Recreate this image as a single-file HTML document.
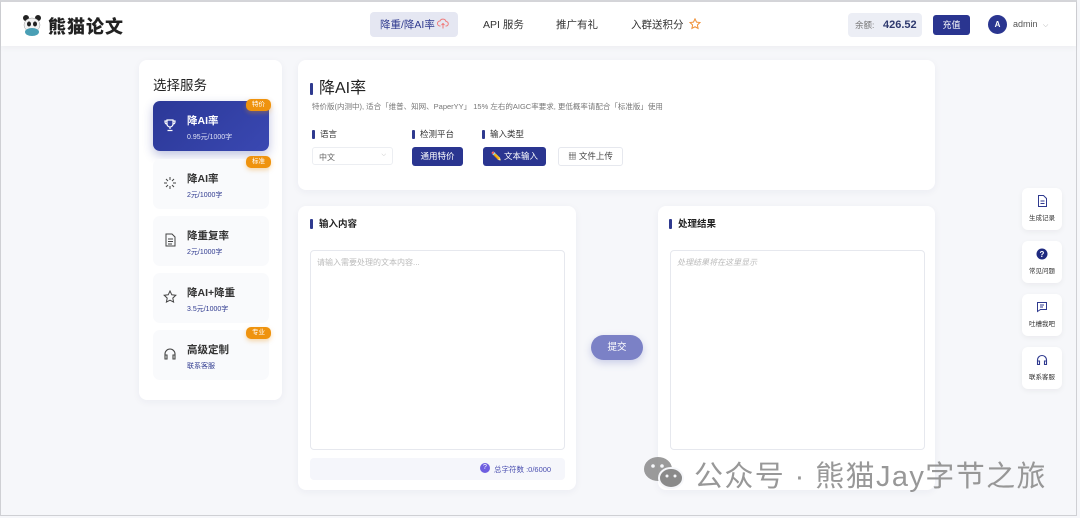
<!DOCTYPE html>
<html><head><meta charset="utf-8"><style>
*{box-sizing:border-box;margin:0;padding:0}
body{width:1080px;height:518px;overflow:hidden;background:#f6f7fa;font-family:"Liberation Sans","Noto Sans CJK SC",sans-serif;color:#222;position:relative}
.a{position:absolute}
.frame{left:0;top:0;width:1077px;height:516px;border:1px solid #cfd0d4;border-top:2px solid #d5d6da}
.hdr{left:1px;top:2px;width:1075px;height:44px;background:#fff;box-shadow:0 2px 6px rgba(0,0,0,.04)}
.card{background:#fff;border-radius:8px;box-shadow:0 2px 8px rgba(30,40,90,.05)}
.bar{display:inline-block;width:3px;background:#2f3a8f;border-radius:1px;vertical-align:middle;margin-right:6px}
.svc{left:153px;width:116px;height:50px;background:#f9fafc;border-radius:7px}
.svc .t{position:absolute;left:34px;top:12px;font-size:10.5px;font-weight:bold;color:#333}
.svc .p{position:absolute;left:34px;top:31px;font-size:7px;color:#2f3a8f}
.svc .ic{position:absolute;left:10px;top:17px;width:14px;height:14px}
.badge{width:25px;height:12px;background:#ef930e;color:#fff;font-size:6.5px;border-radius:5px;text-align:center;line-height:12px;box-shadow:0 2px 5px rgba(239,147,14,.35)}
.btn{height:19px;border-radius:3px;font-size:8.5px;text-align:center;line-height:19px}
.fl{left:1022px;width:40px;height:42px;background:#fff;border-radius:6px;box-shadow:0 2px 6px rgba(0,0,0,.05);text-align:center;font-size:6.5px;color:#333}
.fl svg{display:block;margin:7px auto 5px}
</style></head><body>
<div class="a frame"></div>
<div class="a hdr"></div>
<div class="a" style="left:22px;top:14px;width:20px;height:20px">
<svg width="20" height="22" viewBox="0 0 20 22"><circle cx="4" cy="4" r="3" fill="#222"/><circle cx="16" cy="4" r="3" fill="#222"/><ellipse cx="10" cy="11" rx="8" ry="7" fill="#f2f2f2" stroke="#999" stroke-width=".5"/><ellipse cx="7" cy="10" rx="2" ry="2.5" fill="#222"/><ellipse cx="13" cy="10" rx="2" ry="2.5" fill="#222"/><ellipse cx="10" cy="18" rx="7" ry="4" fill="#4a9fb5"/></svg></div>
<div class="a" style="left:48px;top:13px;font-size:18px;font-weight:900;letter-spacing:1px">熊猫论文</div>
<div class="a" style="left:370px;top:12px;width:88px;height:25px;background:#e5e7f2;border-radius:4px"></div>
<div class="a" style="left:380px;top:17px;font-size:10.5px;color:#2f3a8f">降重/降AI率</div>
<svg class="a" style="left:437px;top:18px" width="12" height="11" viewBox="0 0 12 11" fill="none" stroke="#f07a7a" stroke-width="1"><path d="M3.5 8H3a2.5 2.5 0 0 1 0-5 3.2 3.2 0 0 1 6 .5A2.2 2.2 0 0 1 9 8h-.5 M6 5v5.5 M4.5 7L6 5.5 7.5 7"/></svg>
<div class="a" style="left:483px;top:17px;font-size:10.5px;color:#333">API 服务</div>
<div class="a" style="left:556px;top:17px;font-size:10.5px;color:#333">推广有礼</div>
<div class="a" style="left:631px;top:17px;font-size:10.5px;color:#333">入群送积分</div>
<svg class="a" style="left:689px;top:18px" width="12" height="12" viewBox="0 0 14 14" fill="none" stroke="#f0923a" stroke-width="1.2"><path d="M7 1l1.8 3.8 4 .5-3 2.8.8 4L7 10.2 3.4 12.1l.8-4-3-2.8 4-.5z"/></svg>
<div class="a" style="left:848px;top:13px;width:74px;height:24px;background:#eceef5;border-radius:4px"></div>
<div class="a" style="left:855px;top:19px;font-size:8.5px;color:#777;line-height:12px">余额:</div>
<div class="a" style="left:883px;top:18px;font-size:11px;font-weight:bold;color:#2f3a6f;line-height:14px">426.52</div>
<div class="a btn" style="left:933px;top:15px;width:37px;height:20px;line-height:20px;background:#2a3590;color:#fff;font-size:9px">充值</div>
<div class="a" style="left:988px;top:15px;width:19px;height:19px;border-radius:50%;background:#2a3590;color:#fff;font-size:8px;font-weight:bold;text-align:center;line-height:19px">A</div>
<div class="a" style="left:1013px;top:19px;font-size:9px;color:#555;line-height:11px">admin <span style="color:#aaa;font-size:7px;margin-left:3px">⌵</span></div>

<div class="a card" style="left:139px;top:60px;width:143px;height:340px"></div>
<div class="a" style="left:153px;top:74px;font-size:13.5px;color:#222">选择服务</div>
<div class="a svc" style="top:101px;background:linear-gradient(135deg,#2b3897,#3a48b2);box-shadow:0 4px 10px rgba(43,56,151,.3)">
<svg class="ic" viewBox="0 0 14 14" fill="none" stroke="#fff" stroke-width="1.2"><path d="M4 2h6v4a3 3 0 0 1-6 0z M4 3H2v1a2 2 0 0 0 2 2 M10 3h2v1a2 2 0 0 1-2 2 M7 9v2 M4.5 12.5h5"/></svg>
<div class="t" style="color:#fff">降AI率</div><div class="p" style="color:#dfe2f5">0.95元/1000字</div></div>
<div class="a badge" style="left:246px;top:99px">特价</div>
<div class="a svc" style="top:159px"><svg class="ic" viewBox="0 0 14 14" stroke="#444" stroke-width="1"><path d="M7 1v3M7 10v3M1 7h3M10 7h3M3 3l2 2M9 9l2 2M11 3L9 5M5 9l-2 2"/></svg><div class="t">降AI率</div><div class="p">2元/1000字</div></div>
<div class="a badge" style="left:246px;top:156px">标准</div>
<div class="a svc" style="top:216px"><svg class="ic" viewBox="0 0 14 14" fill="none" stroke="#444" stroke-width="1"><path d="M3 1h6l3 3v9H3z M5 6h5M5 8.5h5M5 11h4"/></svg><div class="t">降重复率</div><div class="p">2元/1000字</div></div>
<div class="a svc" style="top:273px"><svg class="ic" viewBox="0 0 14 14" fill="none" stroke="#444" stroke-width="1"><path d="M7 1l1.8 3.8 4 .5-3 2.8.8 4L7 10.2 3.4 12.1l.8-4-3-2.8 4-.5z"/></svg><div class="t">降AI+降重</div><div class="p">3.5元/1000字</div></div>
<div class="a svc" style="top:330px"><svg class="ic" viewBox="0 0 14 14" fill="none" stroke="#444" stroke-width="1.1"><path d="M2 9V7a5 5 0 0 1 10 0v2 M2 8h2v4H2z M10 8h2v4h-2z"/></svg><div class="t">高级定制</div><div class="p">联系客服</div></div>
<div class="a badge" style="left:246px;top:327px">专业</div>

<div class="a card" style="left:298px;top:60px;width:637px;height:130px"></div>
<div class="a" style="left:310px;top:74px;font-size:16px;color:#222"><span class="bar" style="height:12px"></span>降AI率</div>
<div class="a" style="left:312px;top:101px;font-size:7.5px;color:#777">特价版(内测中), 适合「维普、知网、PaperYY」 15% 左右的AIGC率要求, 更低概率请配合「标准版」使用</div>
<div class="a" style="left:312px;top:128px;font-size:8.5px;color:#333"><span class="bar" style="height:9px;margin-right:5px"></span>语言</div>
<div class="a" style="left:412px;top:128px;font-size:8.5px;color:#333"><span class="bar" style="height:9px;margin-right:5px"></span>检测平台</div>
<div class="a" style="left:482px;top:128px;font-size:8.5px;color:#333"><span class="bar" style="height:9px;margin-right:5px"></span>输入类型</div>
<div class="a" style="left:312px;top:147px;width:81px;height:18px;border:1px solid #eceef2;border-radius:3px;font-size:8px;color:#666;padding:4px 6px">中文<span style="float:right;color:#bbb;font-size:6px">⌵</span></div>
<div class="a btn" style="left:412px;top:147px;width:51px;background:#2a3590;color:#fff">通用特价</div>
<div class="a btn" style="left:483px;top:147px;width:63px;background:#2a3590;color:#fff">✏️ 文本输入</div>
<div class="a btn" style="left:558px;top:147px;width:65px;background:#fff;border:1px solid #e6e8ee;color:#444;line-height:17px">▦ 文件上传</div>

<div class="a card" style="left:298px;top:206px;width:278px;height:284px"></div>
<div class="a" style="left:310px;top:216px;font-size:9.5px;font-weight:bold;color:#222"><span class="bar" style="height:10px"></span>输入内容</div>
<div class="a" style="left:310px;top:250px;width:255px;height:200px;border:1px solid #e6e8ee;border-radius:4px;background:#fff;font-size:8px;color:#bbb;padding:6px 6px">请输入需要处理的文本内容...</div>
<div class="a" style="left:310px;top:458px;width:255px;height:22px;background:#f5f6fb;border-radius:4px"></div>
<div class="a" style="left:480px;top:463px;width:10px;height:10px;border-radius:50%;background:#6e5ee0;color:#fff;font-size:7px;text-align:center;line-height:10px">?</div>
<div class="a" style="left:494px;top:464px;font-size:7.5px;color:#4a4fb0">总字符数 :0/6000</div>

<div class="a" style="left:591px;top:335px;width:52px;height:25px;border-radius:13px;background:#7b81c6;color:#fff;font-size:9.5px;text-align:center;line-height:25px;box-shadow:0 3px 8px rgba(100,110,190,.3)">提交</div>

<div class="a card" style="left:658px;top:206px;width:277px;height:284px"></div>
<div class="a" style="left:669px;top:216px;font-size:9.5px;font-weight:bold;color:#222"><span class="bar" style="height:10px"></span>处理结果</div>
<div class="a" style="left:670px;top:250px;width:255px;height:200px;border:1px solid #e6e8ee;border-radius:4px;background:#fff;font-size:8px;color:#bbb;font-style:italic;padding:6px 6px">处理结果将在这里显示</div>

<div class="a fl" style="top:188px"><svg width="11" height="12" viewBox="0 0 11 12" fill="none" stroke="#2f3a8f" stroke-width="1"><path d="M1.5 .5h5l3 3v8h-8z M3.5 6h4M3.5 8.5h4"/></svg>生成记录</div>
<div class="a fl" style="top:241px"><svg width="12" height="12" viewBox="0 0 12 12"><circle cx="6" cy="6" r="5.5" fill="#1f2a80"/><text x="6" y="9" font-size="8" font-weight="bold" fill="#fff" text-anchor="middle" font-family="Liberation Sans">?</text></svg>常见问题</div>
<div class="a fl" style="top:294px"><svg width="12" height="12" viewBox="0 0 12 12" fill="none" stroke="#2f3a8f" stroke-width="1"><path d="M1.5 1.5h9v7h-6l-3 2z M4 4h4M4 6h3"/></svg>吐槽我吧</div>
<div class="a fl" style="top:347px"><svg width="12" height="12" viewBox="0 0 12 12" fill="none" stroke="#2f3a8f" stroke-width="1.1"><path d="M1.5 8V6a4.5 4.5 0 0 1 9 0v2 M1.5 7h2v3.5h-2z M8.5 7h2v3.5h-2z"/></svg>联系客服</div>

<svg class="a" style="left:643px;top:455px" width="42" height="36" viewBox="0 0 42 36"><ellipse cx="15" cy="14" rx="14" ry="12" fill="#8a8a8a" opacity=".85"/><ellipse cx="28" cy="23" rx="12" ry="10" fill="#8a8a8a" stroke="#f6f7fa" stroke-width="2"/><circle cx="10" cy="11" r="1.8" fill="#f6f7fa"/><circle cx="19" cy="11" r="1.8" fill="#f6f7fa"/><circle cx="24" cy="21" r="1.5" fill="#f6f7fa"/><circle cx="32" cy="21" r="1.5" fill="#f6f7fa"/></svg>
<div class="a" style="left:694px;top:453px;font-size:29px;color:#8d8d8d;letter-spacing:1.4px;opacity:.9;white-space:nowrap">公众号 · 熊猫Jay字节之旅</div>
</body></html>
